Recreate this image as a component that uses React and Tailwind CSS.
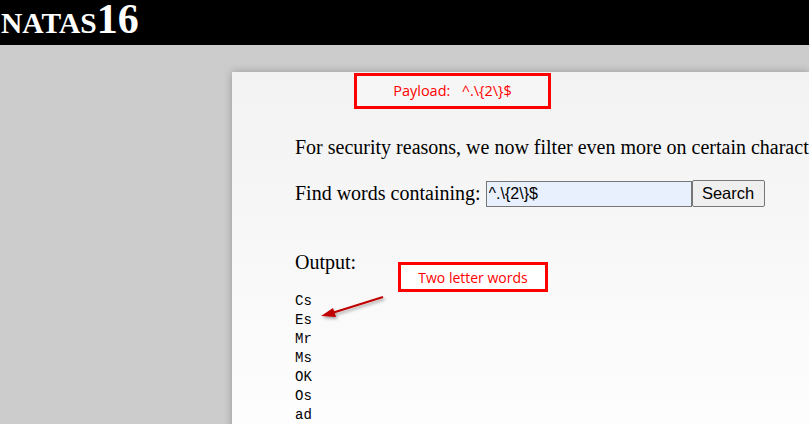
import React from 'react';

const words = ['Cs', 'Es', 'Mr', 'Ms', 'OK', 'Os', 'ad'];

export default function App() {
  return (
    <div className="min-h-[424px] h-[424px] overflow-hidden bg-[#cccccc] relative" style={{ fontFamily: '"Liberation Serif", serif' }}>
      {/* Header */}
      <div className="h-[45px] bg-black pl-[1px] flex flex-col overflow-hidden">
        <div className="flex items-baseline -mt-[5px]">
          <span className="text-white font-bold leading-[48px] text-[29.5px]">NATAS</span>
          <span className="text-white font-bold leading-[48px] text-[42px]">16</span>
        </div>
      </div>

      {/* Content panel */}
      <div className="ml-[232px] mt-[27px] h-[400px] bg-gradient-to-b from-[#f2f2f2] to-white shadow-[0_0_8px_rgba(0,0,0,0.25)] pl-[63px] pt-[64px] text-black text-[20px]">
        <p className="whitespace-nowrap leading-[23px]">For security reasons, we now filter even more on certain characters</p>

        <div className="mt-[21px] flex items-center h-[27px]">
          <span className="leading-[23px] mr-[5px]">Find words containing:</span>
          <input
            readOnly
            value={'^.\\{2\\}$'}
            className="w-[206px] h-[26px] border border-[#767676] bg-[#e8f0fe] px-[2px] text-[16px] text-black outline-none"
            style={{ fontFamily: '"Liberation Sans", Arial, sans-serif' }}
          />
          <button
            className="h-[27px] w-[73px] border border-[#767676] rounded-[2px] bg-[#efefef] text-[16.5px] text-black"
            style={{ fontFamily: '"Liberation Sans", Arial, sans-serif' }}
          >
            Search
          </button>
        </div>

        <p className="mt-[44px] leading-[23px]">Output:</p>

        <pre className="mt-[18px] text-[14px] leading-[19px]" style={{ fontFamily: '"Liberation Mono", monospace' }}>
          {words.join('\n')}
        </pre>
      </div>

      {/* Annotations */}
      <div
        className="absolute left-[354px] top-[73px] w-[197px] h-[36px] border-[3px] border-[#ff0000] bg-[#f6f6f6] flex items-center justify-center text-[#ff0000] text-[14.5px] whitespace-pre"
        style={{ fontFamily: '"Open Sans", "Noto Sans", sans-serif' }}
      >
        {'Payload:   ^.\\{2\\}$'}
      </div>

      <div
        className="absolute left-[398px] top-[262px] w-[150px] h-[30px] border-[3px] border-[#ff0000] bg-white flex items-center justify-center text-[#ff0000] text-[14px]"
        style={{ fontFamily: '"Open Sans", "Noto Sans", sans-serif' }}
      >
        Two letter words
      </div>

      <svg className="absolute left-[312px] top-[290px]" width="80" height="36" viewBox="0 0 80 36">
        <defs>
          <filter id="sh" x="-20%" y="-50%" width="140%" height="200%">
            <feDropShadow dx="1.5" dy="2" stdDeviation="1.5" floodColor="#000" floodOpacity="0.35" />
          </filter>
        </defs>
        <g filter="url(#sh)">
          <line x1="71" y1="7" x2="20" y2="23" stroke="#c00000" strokeWidth="2" />
          <polygon points="9,26 21,18 24,27" fill="#c00000" />
        </g>
      </svg>
    </div>
  );
}
